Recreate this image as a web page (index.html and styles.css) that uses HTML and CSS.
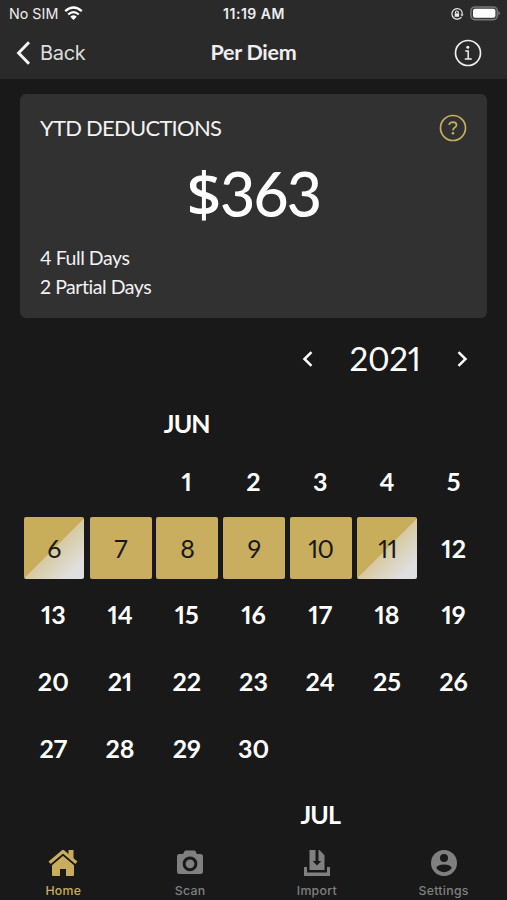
FILE: index.html
```html
<!DOCTYPE html>
<html lang="en">
<head>
<meta charset="utf-8">
<title>Per Diem</title>
<link rel="stylesheet" href="styles.css">
</head>
<body>
<header class="top">
  <div class="status">
    <div class="carrier"><span>No SIM</span>
      <svg width="19" height="15" viewBox="0 0 19 15" fill="none" stroke="#fff" stroke-width="2.3"><path d="M1.2 5.2Q9.5-2.2 17.8 5.2M4.2 8.5Q9.5 3.8 14.8 8.5"/><path d="M6.3 10.7Q9.5 8 12.7 10.7L9.5 14Z" fill="#fff" stroke="none"/></svg>
    </div>
    <div class="clock">11:19 AM</div>
    <div class="power">
      <svg width="14" height="14" viewBox="0 0 14 14" fill="none" stroke="#e8e8e8" stroke-width="1.2"><path d="M11 3.2A5.3 5.3 0 1 0 11.5 10"/><path d="M10.4 7.2h3.2L12 9.4Z" fill="#e8e8e8" stroke="none"/><path d="M11 3.2Q12.3 4.8 12.2 7"/><path d="M5.5 6.5V5.4a1.4 1.4 0 0 1 2.8 0v1.1"/><path d="M4.7 6.3h4.4v3.5H4.7z" fill="#e8e8e8" stroke="none"/></svg>
      <svg width="31" height="15" viewBox="0 0 31 15"><rect x=".9" y=".9" width="26.4" height="12.8" rx="4" fill="#3a3a3a" stroke="#777" stroke-width="1.5"/><rect x="3" y="2.8" width="22.4" height="9" rx="2" fill="#fff"/><path d="M28.4 5q1.6.8 1.6 2.3t-1.6 2.3z" fill="#777"/></svg>
    </div>
  </div>
  <nav class="navbar">
    <div class="back"><svg width="15" height="24" viewBox="0 0 15 24" fill="none" stroke="#f4f4f4" stroke-width="3"><path d="M13 1.2 2.6 12 13 22.8"/></svg><span>Back</span></div>
    <h1>Per Diem</h1>
    <svg class="info" width="28" height="28" viewBox="0 0 28 28" fill="none" stroke="#eee" stroke-width="1.7"><circle cx="14" cy="14" r="12.5"/><path d="M11.2 12h3v8M10.8 20h7" stroke-width="1.5"/><circle cx="13.8" cy="8.3" r="1.5" fill="#eee" stroke="none"/></svg>
  </nav>
</header>
<main>
  <section class="card">
    <div class="card-head"><h2>YTD DEDUCTIONS</h2>
      <svg width="28" height="28" viewBox="0 0 28 28" fill="none" stroke="#c8ad5c" stroke-width="1.7"><circle cx="14" cy="14" r="12.5"/><path d="M10.4 11V9.8Q11.4 8.2 14 8.2q3.5.1 3.5 2.8 0 1.4-1.7 2.4-1.8 1-1.8 3.2"/><circle cx="14" cy="19.2" r="1.3" fill="#c8ad5c" stroke="none"/></svg>
    </div>
    <div class="amount"><span class="currency">$</span>363</div>
    <p>4 Full Days</p>
    <p>2 Partial Days</p>
  </section>
  <div class="year">
    <svg width="12" height="18" viewBox="0 0 12 18" fill="none" stroke="#fff" stroke-width="2.5"><path d="M9.5 2.2 2.5 9l7 6.8"/></svg>
    <span>2021</span>
    <svg width="12" height="18" viewBox="0 0 12 18" fill="none" stroke="#fff" stroke-width="2.5"><path d="m2.5 2.2 7 6.8-7 6.8"/></svg>
  </div>
  <div class="grid month-row"><b class="jun">JUN</b></div>
  <div class="grid days">
    <b class="first">1</b><b>2</b><b>3</b><b>4</b><b>5</b>
    <span class="part">6</span><span class="full">7</span><span class="full">8</span><span class="full">9</span><span class="full">10</span><span class="part">11</span><b>12</b>
    <b>13</b><b>14</b><b>15</b><b>16</b><b>17</b><b>18</b><b>19</b>
    <b>20</b><b>21</b><b>22</b><b>23</b><b>24</b><b>25</b><b>26</b>
    <b>27</b><b>28</b><b>29</b><b>30</b><b class="jul">JUL</b>
  </div>
</main>
<footer class="tabs">
  <div class="tab active"><svg width="30" height="28" viewBox="0 0 30 28"><path d="M20.5 1h5v10l-5-4.5z"/><path d="M1.6 13.8 15 2.5l13.4 11.3" fill="none" stroke="currentColor" stroke-width="3.2" stroke-linejoin="round"/><path d="M4 15.7 15 6.5l11 9.2V26q0 1-1 1h-7v-7h-6v7H5q-1 0-1-1z"/><path d="M3.5 15.8 15 6.1l11.5 9.7" fill="none" stroke="#191919" stroke-width="1.3"/></svg><span>Home</span></div>
  <div class="tab"><svg width="28" height="28" viewBox="0 0 28 28"><path fill-rule="evenodd" d="M3.5 5H7l2-3.5h10L21 5h3.5Q27 5 27 7.5v15q0 2.5-2.5 2.5h-21Q1 25 1 22.5v-15Q1 5 3.5 5zM14 7.4a7.4 7.4 0 1 0 0 14.8 7.4 7.4 0 0 0 0-14.8zm0 3a4.4 4.4 0 1 1 0 8.8 4.4 4.4 0 0 1 0-8.8z"/></svg><span>Scan</span></div>
  <div class="tab"><svg width="28" height="28" viewBox="0 0 28 28"><path d="M1 18h3v5.5h20V18h3v9H1zM6.5 1h6v11H9.7l4.3 4.6 4.3-4.6h-2.8V1h1l5 5.2V21h-15z"/></svg><span>Import</span></div>
  <div class="tab"><svg width="28" height="28" viewBox="0 0 28 28"><path fill-rule="evenodd" d="M14 1a13 13 0 1 0 0 26 13 13 0 0 0 0-26zm0 4a4 4 0 1 1 0 8 4 4 0 0 1 0-8zm0 18.2q-5 0-7.7-4.1Q7 15.4 14 15.4t7.7 3.7q-2.7 4.1-7.7 4.1z"/></svg><span>Settings</span></div>
</footer>
</body>
</html>
```
FILE: styles.css
```css
* { box-sizing: border-box; }
body {
  margin: 0;
  width: 507px;
  height: 900px;
  overflow: hidden;
  display: flex;
  flex-direction: column;
  background: #191919;
  color: #fff;
  font-family: Lato, "Liberation Sans", sans-serif;
  font-variant-numeric: proportional-nums;
}
svg { display: block; flex: none; }
h1, h2, p { margin: 0; }
.top { flex: none; height: 79px; background: #2a2a2a; }
.status {
  height: 27px;
  padding: 0 6px 0 9px;
  display: grid;
  grid-template-columns: 1fr auto 1fr;
  align-items: center;
  font: 14.3px Inter, sans-serif;
  color: #eee;
}
.carrier, .power { display: flex; align-items: center; gap: 6px; }
.power { justify-content: flex-end; }
.clock { font-size: 14px; font-weight: 600; letter-spacing: .5px; margin-right: 2px; }
.navbar {
  height: 51px;
  padding: 0 25px 0 16px;
  display: grid;
  grid-template-columns: 1fr auto 1fr;
  align-items: center;
}
.back { display: flex; align-items: center; gap: 9px; font: 20px Inter, sans-serif; letter-spacing: -.3px; color: #ddd; }
.navbar h1 { font-size: 21.5px; font-weight: 700; letter-spacing: -.3px; color: #eee; margin: -2px 0 0 9px; }
.info { justify-self: end; }
main { flex: 1; min-height: 0; overflow: hidden; padding: 15px 20px 0; }
.card { height: 224px; padding: 20px; border-radius: 6px; background: #313131; color: #f2f2f2; }
.card-head { display: flex; align-items: center; justify-content: space-between; height: 28px; }
.card h2 { font-size: 22px; font-weight: 400; letter-spacing: -.75px; margin-top: -2px; }
.amount { height: 76px; margin-top: 14px; line-height: 76px; text-align: center; font-size: 61px; font-weight: 500; letter-spacing: -1.5px; color: #fff; }
.currency { font-family: "Noto Sans", sans-serif; }
.card p { font-size: 19.5px; line-height: 29px; letter-spacing: -.45px; }
.amount + p { margin-top: 11px; }
.year { height: 81px; padding-right: 19px; display: flex; align-items: center; justify-content: flex-end; }
.year span { width: 142px; margin-top: -2px; text-align: center; font-size: 33px; letter-spacing: -.3px; }
.grid { display: grid; grid-template-columns: repeat(7, 1fr); place-items: center; font-size: 25px; letter-spacing: 0; }
.month-row { height: 49px; }
.grid .jun { grid-column: 3; margin-top: -2px; letter-spacing: -.9px; }
.grid .jul { grid-column: 5; grid-row: 6; letter-spacing: -.9px; }
.days { grid-auto-rows: 66.6px; }
.first { grid-column: 3; }
.full, .part {
  width: 62px;
  height: 62px;
  margin-left: 1px;
  border-radius: 2px;
  display: flex;
  align-items: center;
  justify-content: center;
  background: #c8ae5e;
  color: #191919;
  letter-spacing: -.8px;
}
.part { width: 60px; background: linear-gradient(135deg, #c8ad5a 50%, #d7c9a0 50.5%, #e0dfdf 85%); }
.tabs { flex: none; height: 56px; display: grid; grid-template-columns: repeat(4, 1fr); background: #191919; }
.tab { display: flex; flex-direction: column; align-items: center; padding-top: 5px; color: #808080; fill: currentColor; }
.tab span { margin-top: 6px; font: 500 12.3px/15px Inter, sans-serif; letter-spacing: .3px; }
.active { color: #c8ad5c; }
```
